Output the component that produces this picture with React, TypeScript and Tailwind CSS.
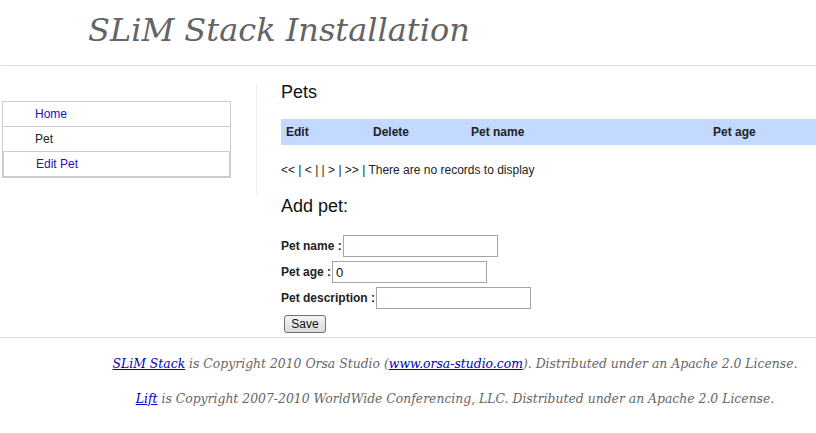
import React from "react";

/* ========= Data ========= */
const NAV = [
  { label: "Home", link: true, current: false },
  { label: "Pet", link: false, current: false },
  { label: "Edit Pet", link: true, current: true },
];

const COLUMNS = [
  { label: "Edit", w: "w-[87px]" },
  { label: "Delete", w: "w-[98px]" },
  { label: "Pet name", w: "w-[242px]" },
  { label: "Pet age", w: "" },
];

const FIELDS = [
  { label: "Pet name :", value: "" },
  { label: "Pet age :", value: "0" },
  { label: "Pet description :", value: "" },
];

const sans = "font-['Liberation_Sans',Arial,sans-serif]";
const serif = "font-['DejaVu_Serif',Georgia,serif]";

/* ========= Sidebar ========= */
function SideNav() {
  return (
    <ul className="ml-[2px] w-[229px] border border-[#ccc]">
      {NAV.map((n, i) => (
        <li
          key={n.label}
          className={
            "h-[25px] flex items-center pl-[32px] text-[12px] " +
            (i < NAV.length - 1 ? "border-b border-[#ccc] " : "") +
            (n.current ? "border-x border-b border-[#ccc]" : "")
          }
        >
          {n.link ? (
            <a href="#" className="text-[#2211bb]">
              {n.label}
            </a>
          ) : (
            <span className="text-[#222]">{n.label}</span>
          )}
        </li>
      ))}
    </ul>
  );
}

/* ========= Main Page ========= */
export default function App() {
  return (
    <div className={"w-[816px] h-[433px] overflow-hidden bg-white text-[#222] " + sans}>
      {/* Header */}
      <header className="h-[66px] border-b border-[#ddd] ml-[1px]">
        <h1
          className={
            "pl-[87px] pt-[12px] text-[32px] leading-[36px] italic text-[#646464] " + serif
          }
        >
          SLiM Stack Installation
        </h1>
      </header>

      <div className="flex items-start">
        {/* Sidebar */}
        <aside className="w-[257px] mt-[17px] pt-[18px] pb-[18px] border-r border-[#eee]">
          <SideNav />
        </aside>

        {/* Content */}
        <main className="flex-1 pl-[24px] pt-[17px]">
          <h3 className="text-[18px] leading-[18px] mb-[18px] text-[#111]">Pets</h3>

          <table className="w-full border-collapse mb-[16px]">
            <thead>
              <tr className="bg-[#c3d9ff]">
                {COLUMNS.map((c) => (
                  <th
                    key={c.label}
                    className={
                      "h-[26px] pl-[5px] text-left text-[12px] font-bold text-[#222] " + c.w
                    }
                  >
                    {c.label}
                  </th>
                ))}
              </tr>
            </thead>
          </table>

          <p className="text-[12px] leading-[18px] mb-[18px]">
            &lt;&lt; | &lt; | | &gt; | &gt;&gt; | There are no records to display
          </p>

          <h3 className="text-[18px] leading-[18px] mb-[18px] text-[#111]">Add pet:</h3>

          <form onSubmit={(e) => e.preventDefault()}>
            {FIELDS.map((f) => (
              <div key={f.label} className="h-[26px] flex items-center">
                <label className="text-[12px] font-bold text-[#222]">{f.label}</label>
                <input
                  type="text"
                  defaultValue={f.value}
                  className="ml-[1px] w-[155px] h-[22px] border border-[#a5a5a5] px-[3px] text-[13px] text-[#111] outline-none"
                />
              </div>
            ))}
            <div className="flex pt-[4px] pb-[4px]">
              <button
                type="submit"
                className="ml-[3px] w-[42px] h-[18px] rounded-[3px] border border-[#707070] bg-gradient-to-b from-[#f4f4f4] to-[#dcdcdc] text-[12px] leading-[16px] text-[#111]"
              >
                Save
              </button>
            </div>
          </form>
        </main>
      </div>

      {/* Footer */}
      <footer
        className={
          "border-t border-[#ddd] pt-[17px] pl-[94px] text-center italic text-[#666] text-[12.4px] " +
          serif
        }
      >
        <p className="leading-[18px] mb-[17px]">
          <a href="#" className="text-[#0000bb] underline">
            SLiM Stack
          </a>{" "}
          is Copyright 2010 Orsa Studio (
          <a href="#" className="text-[#0000bb] underline">
            www.orsa-studio.com
          </a>
          ). Distributed under an Apache 2.0 License.
        </p>
        <p className="leading-[18px]">
          <a href="#" className="text-[#0000bb] underline">
            Lift
          </a>{" "}
          is Copyright 2007-2010 WorldWide Conferencing, LLC. Distributed under an Apache 2.0 License.
        </p>
      </footer>
    </div>
  );
}
